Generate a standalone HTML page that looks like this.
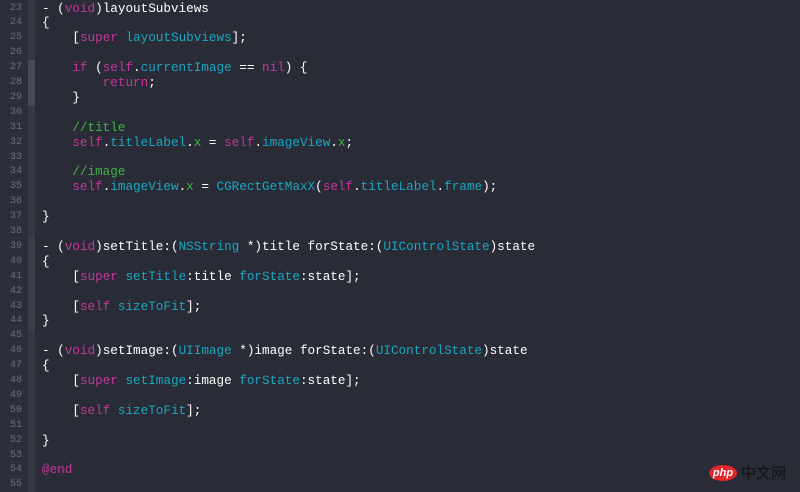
<!DOCTYPE html>
<html><head><style>
body{margin:0;width:800px;height:492px;background:#292c36;overflow:hidden;position:relative;font-family:"Liberation Mono",monospace;}
.g{position:absolute;left:0;top:0;width:28px;height:492px;background:#2c2f39;}
.fb{position:absolute;left:28px;top:0;width:7px;height:492px;background:#353843;}
.fh{position:absolute;left:28px;width:7px;background:#474a55;}
.ln{position:absolute;left:0;width:22px;text-align:right;color:#6c6f7a;font-size:10px;}
.c{position:absolute;left:42px;font-size:12.65px;color:#ffffff;white-space:pre;}
.k{color:#c5359d}.t{color:#1ba6c2}.m{color:#3fb543}.n{color:#1ba6c2}
</style></head><body>
<div class="g"></div><div class="fb"></div>
<div class="fh" style="top:60px;height:46px"></div>
<div class="fh" style="top:238px;height:92px;background:#3c3f4a"></div>
<div id="L"></div>
<script>
var lines=[
'- (<span class="k">void</span>)layoutSubviews',
'{',
'    [<span class="k">super</span> <span class="t">layoutSubviews</span>];',
'',
'    <span class="k">if</span> (<span class="k">self</span>.<span class="t">currentImage</span> == <span class="k">nil</span>) {',
'        <span class="k">return</span>;',
'    }',
'',
'    <span class="m">//title</span>',
'    <span class="k">self</span>.<span class="t">titleLabel</span>.<span class="m">x</span> = <span class="k">self</span>.<span class="t">imageView</span>.<span class="m">x</span>;',
'',
'    <span class="m">//image</span>',
'    <span class="k">self</span>.<span class="t">imageView</span>.<span class="m">x</span> = <span class="t">CGRectGetMaxX</span>(<span class="k">self</span>.<span class="t">titleLabel</span>.<span class="t">frame</span>);',
'',
'}',
'',
'- (<span class="k">void</span>)setTitle:(<span class="t">NSString</span> *)title forState:(<span class="t">UIControlState</span>)state',
'{',
'    [<span class="k">super</span> <span class="t">setTitle</span>:title <span class="t">forState</span>:state];',
'',
'    [<span class="k">self</span> <span class="t">sizeToFit</span>];',
'}',
'',
'- (<span class="k">void</span>)setImage:(<span class="t">UIImage</span> *)image forState:(<span class="t">UIControlState</span>)state',
'{',
'    [<span class="k">super</span> <span class="t">setImage</span>:image <span class="t">forState</span>:state];',
'',
'    [<span class="k">self</span> <span class="t">sizeToFit</span>];',
'',
'}',
'',
'<span class="k">@end</span>',
''];
var h='';
for(var i=0;i<lines.length;i++){
 var cy=9+i*14.9;
 h+='<div class="ln" style="top:'+(cy-6.5)+'px">'+(23+i)+'</div>';
 h+='<div class="c" style="top:'+(cy-8.5)+'px">'+lines[i]+'</div>';
}
document.getElementById('L').innerHTML=h;
</script>
<div style="position:absolute;left:709px;top:465px;width:28px;height:16px;border-radius:50%;background:#e2262a;color:#fff;font:italic bold 11px 'Liberation Sans',sans-serif;text-align:center;line-height:16px">php</div>
<div style="position:absolute;left:741px;top:464px;color:#111;font:15px 'Noto Sans CJK SC',sans-serif;line-height:18px">中文网</div>
</body></html>
